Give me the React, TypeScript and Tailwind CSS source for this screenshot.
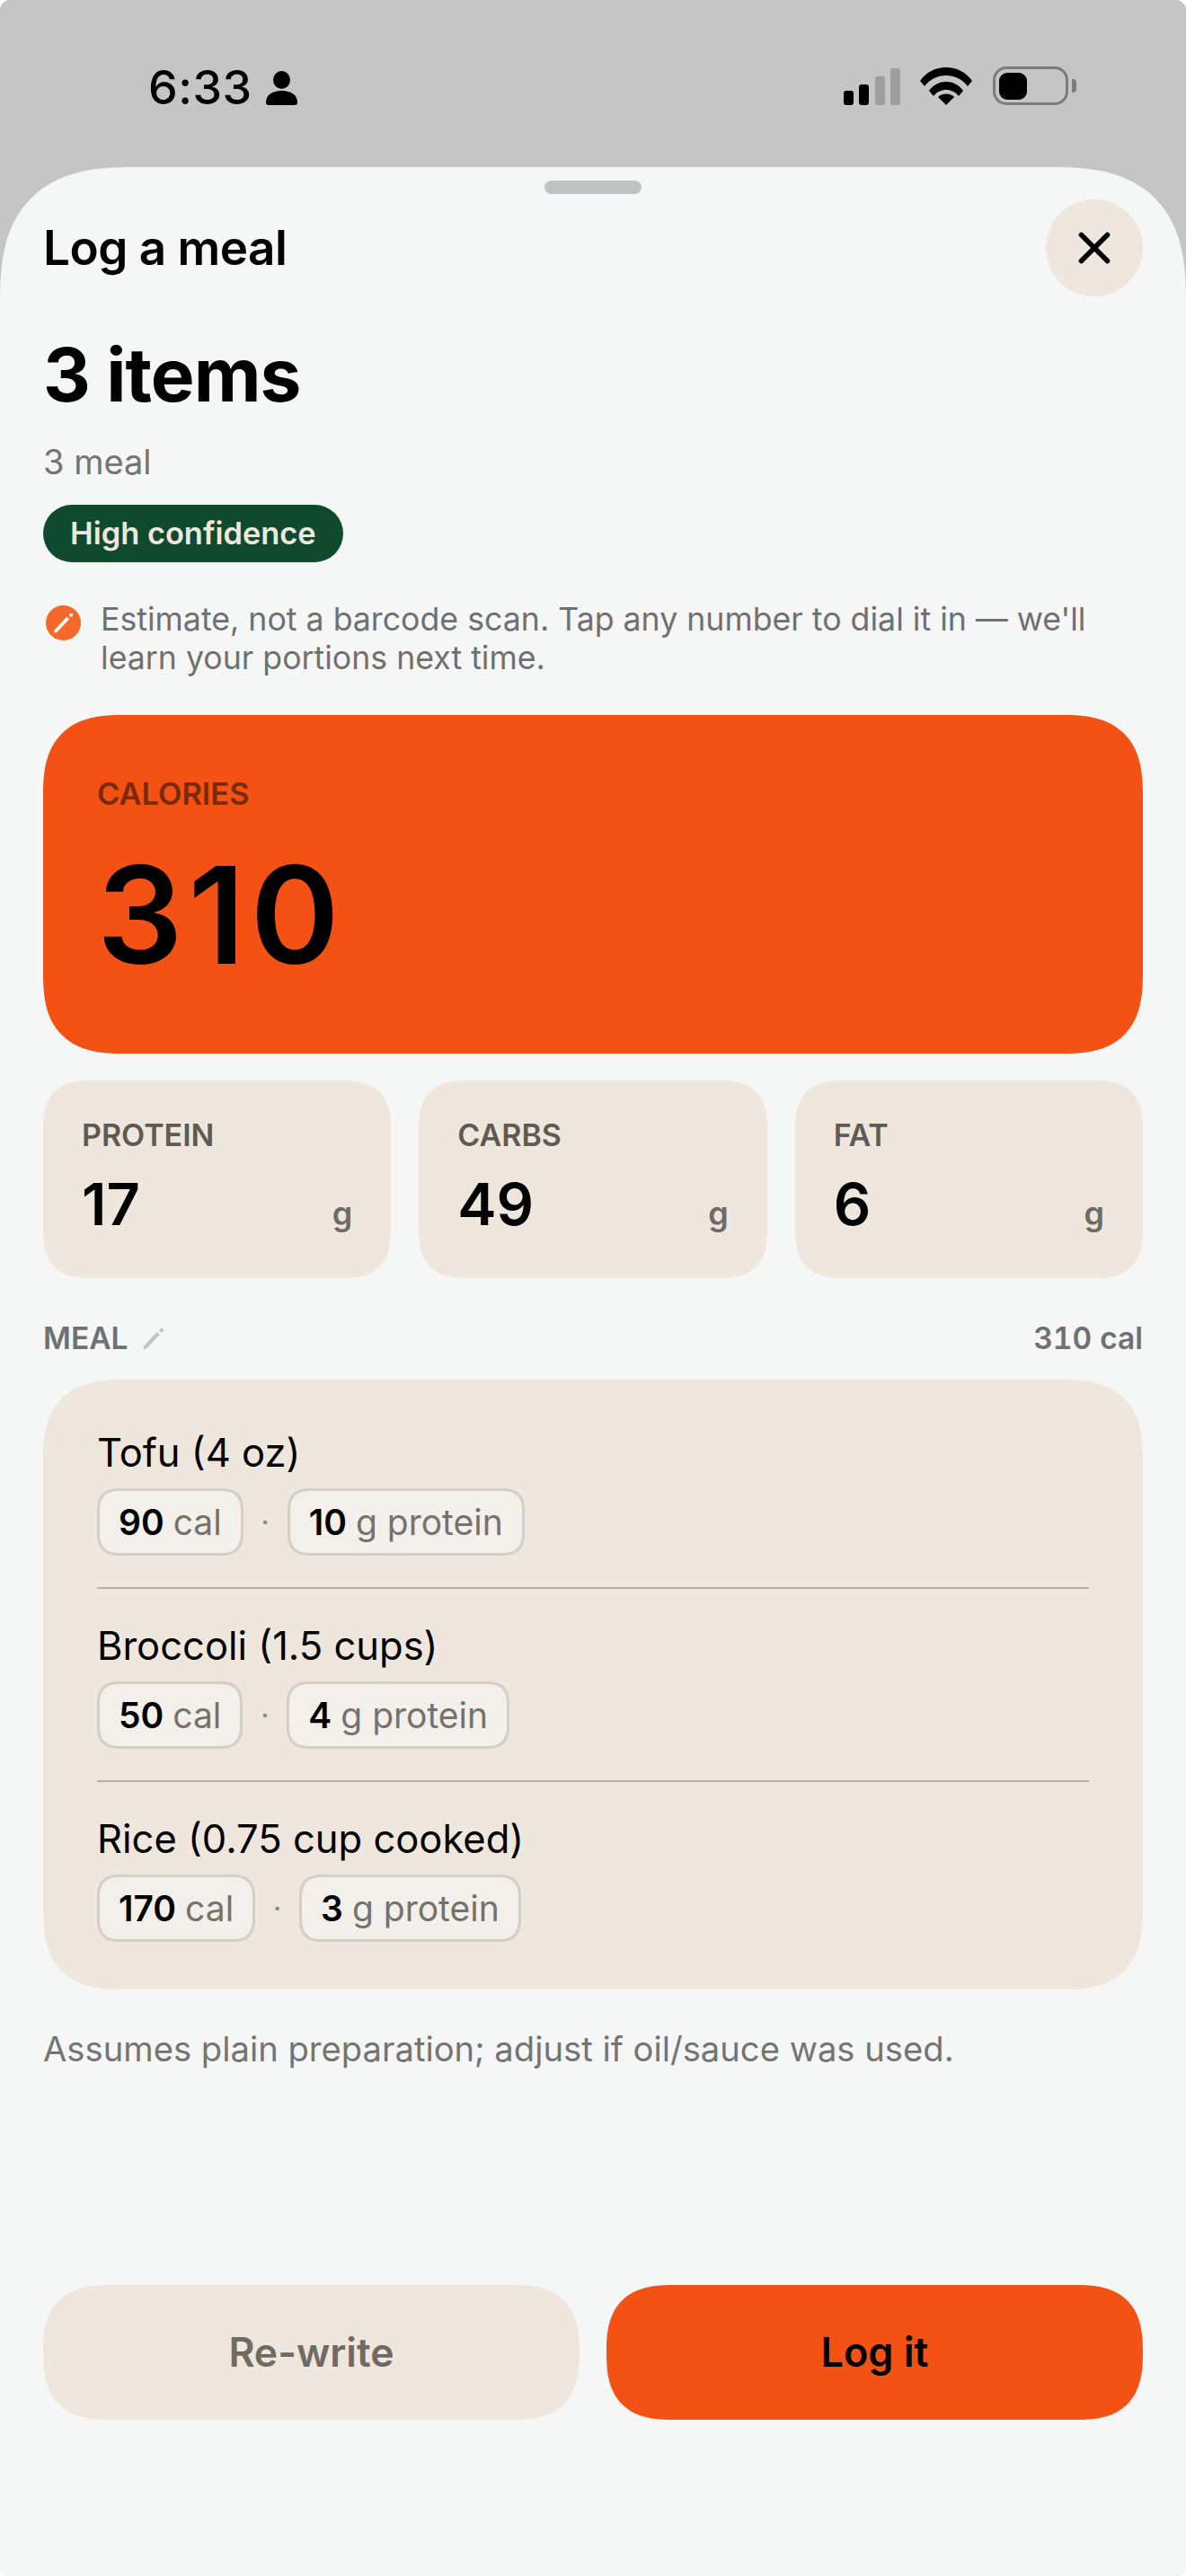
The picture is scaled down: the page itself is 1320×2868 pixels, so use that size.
import React from 'react';

const macros = [
    {label: 'PROTEIN', value: '17'},
    {label: 'CARBS', value: '49'},
    {label: 'FAT', value: '6'},
];

const items = [
    {name: 'Tofu (4 oz)', cal: '90', protein: '10'},
    {name: 'Broccoli (1.5 cups)', cal: '50', protein: '4'},
    {name: 'Rice (0.75 cup cooked)', cal: '170', protein: '3'},
];

const Pencil = ({className}: {className: string}) => (
    <svg viewBox="0 0 24 24" className={className} fill="currentColor">
        <path d="M2 22.6 L2.6 19.4 L15.6 5.4 L18.4 8 L5.2 21.8 Z"/>
        <circle cx="20.2" cy="3.6" r="2"/>
    </svg>
);

const Chip = ({value, unit}: {value: string; unit: string}) => (
    <div className="h-[75px] rounded-[26px] [corner-shape:superellipse(1.4)] border-[3px] border-[#d4cec7] bg-[#f3f0eb] px-[21px] flex items-center text-[39px] leading-none">
        <span className="font-semibold text-black">{value}</span>
        <span className="ml-[10px] text-[#75716c]">{unit}</span>
    </div>
);

const StatusBar = () => (
    <div className="h-[186px] shrink-0 bg-[#c5c5c5] relative flex justify-between pl-[165px] pr-[122px] pt-[71px]">
        <div className="flex items-start">
            <span className="mt-[1px] text-[52px] leading-[52px] font-medium tracking-[0.5px] text-black">6:33</span>
            <svg viewBox="0 0 35 38" className="w-[35px] h-[38px] ml-[15px] mt-[8px]" fill="black">
                <ellipse cx="17.5" cy="10" rx="9.5" ry="10"/>
                <path d="M0 35 C0 27 7 22 17.5 22 C28 22 35 27 35 35 C35 37 34 38 32 38 L3 38 C1 38 0 37 0 35 Z"/>
            </svg>
        </div>
        <div className="flex items-end h-[47px] pb-[1px]">
            <div className="flex items-end gap-[6.5px]">
                <div className="w-[11px] h-[16px] rounded-[3px] bg-black"/>
                <div className="w-[11px] h-[23px] rounded-[3px] bg-black"/>
                <div className="w-[11px] h-[32px] rounded-[3px] bg-[#9e9e9e]"/>
                <div className="w-[11px] h-[41px] rounded-[3px] bg-[#9e9e9e]"/>
            </div>
            <svg viewBox="0 0 58 42" className="w-[58px] h-[42px] ml-[22px]" fill="black">
                <path d="M0 15 C7 5 18 0 29 0 C40 0 51 5 58 15 L53 21 C47 13 38 9 29 9 C20 9 11 13 5 21 Z"/>
                <path d="M10 26 C15 19 22 16 29 16 C36 16 43 19 48 26 L43 32 C39 27 34 25 29 25 C24 25 19 27 15 32 Z"/>
                <path d="M20 33 C22 31 25 29.5 29 29.5 C33 29.5 36 31 38 33 L29 42 Z"/>
            </svg>
            <div className="ml-[23px] w-[84px] h-[43px] rounded-[15px] border-[3.5px] border-[#7b7b7b] p-[3.5px]">
                <div className="w-[31px] h-full rounded-[9px] bg-black"/>
            </div>
            <div className="ml-[4px] mb-[14px] w-[5px] h-[15px] rounded-r-[4px] bg-[#7b7b7b]"/>
        </div>
    </div>
);

export default function App() {
    return (
        <div className="w-[1320px] h-[2868px] overflow-hidden rounded-[12px] bg-[#c5c5c5] flex flex-col font-['Inter',sans-serif] text-black">
            <StatusBar/>
            <div className="flex-1 relative bg-[#f5f7f6] rounded-t-[150px] [corner-shape:superellipse(1.4)] px-[48px] flex flex-col">
                <div className="absolute top-[15px] left-[606px] w-[108px] h-[15px] rounded-full bg-[#c2c2c4]"/>

                <div className="flex justify-between items-start pt-[36px] h-[144px]">
                    <h1 className="text-[53px] leading-[108px] font-semibold tracking-[-0.5px]">Log a meal</h1>
                    <button className="w-[108px] h-[108px] rounded-full bg-[#efe7dd] flex items-center justify-center">
                        <svg viewBox="0 0 36 36" className="w-[36px] h-[36px]" stroke="black" strokeWidth="5.6" strokeLinecap="round">
                            <path d="M3.5 3.5 L32.5 32.5 M32.5 3.5 L3.5 32.5"/>
                        </svg>
                    </button>
                </div>

                <h2 className="mt-[38px] text-[82px] leading-[100px] font-bold tracking-[-1px]">3 items</h2>
                <p className="mt-[23px] text-[38px] leading-[46px] text-[#747474]">3 meal</p>
                <div className="mt-[25px] self-start h-[64px] rounded-full bg-[#0f4a2e] px-[30px] flex items-center text-[34.4px] font-semibold text-[#efe7dd]">
                    High confidence
                </div>

                <div className="mt-[42px] flex">
                    <div className="mt-[6px] ml-[3px] w-[39px] h-[39px] shrink-0 rounded-full bg-[#f4692b] flex items-center justify-center text-white">
                        <Pencil className="w-[25px] h-[25px]"/>
                    </div>
                    <p className="ml-[22px] text-[35.7px] leading-[43px] text-[#707070]">
                        Estimate, not a barcode scan. Tap any number to dial it in — we'll learn your portions next time.
                    </p>
                </div>

                <div className="mt-[42px] h-[377px] rounded-[90px] [corner-shape:superellipse(1.4)] bg-[#f45114] pl-[60px] pt-[68px]">
                    <div className="text-[34.4px] leading-[40px] font-semibold text-[#7a2a0a]">CALORIES</div>
                    <div className="mt-[40px] text-[150px] leading-[150px] font-semibold tracking-[6px]">310</div>
                </div>

                <div className="mt-[30px] grid grid-cols-3 gap-[31px]">
                    {macros.map(({label, value}) => (
                        <div key={label} className="h-[220px] rounded-[54px] [corner-shape:superellipse(1.4)] bg-[#efe7dd] px-[43px] pt-[41px]">
                            <div className="text-[34px] leading-[40px] font-semibold text-[#5f5b54]">{label}</div>
                            <div className="mt-[21px] flex justify-between items-baseline">
                                <span className="text-[65px] leading-[72px] font-semibold">{value}</span>
                                <span className="text-[36px] font-semibold text-[#6f6b64]">g</span>
                            </div>
                        </div>
                    ))}
                </div>

                <div className="mt-[47px] flex justify-between items-center h-[40px] text-[33.5px] font-semibold text-[#707070]">
                    <div className="flex items-center">
                        <span>MEAL</span>
                        <Pencil className="ml-[14px] w-[27px] h-[27px] text-[#c2c2c2]"/>
                    </div>
                    <span className="tabular-nums">310 cal</span>
                </div>

                <div className="mt-[26px] h-[679px] rounded-[90px] [corner-shape:superellipse(1.4)] bg-[#efe7dd] px-[60px] pt-[55px]">
                    {items.map(({name, cal, protein}, index) => (
                        <div key={name} className={index > 0 ? 'mt-[35px] pt-[37px] border-t-2 border-[#b8aea5]' : ''}>
                            <div className="text-[43.5px] leading-[53px]">{name}</div>
                            <div className="mt-[13px] flex items-center">
                                <Chip value={cal} unit="cal"/>
                                <span className="w-[49px] text-center text-[#8b8781] text-[32px] leading-none">·</span>
                                <Chip value={protein} unit="g protein"/>
                            </div>
                        </div>
                    ))}
                </div>

                <p className="mt-[43px] text-[38.2px] leading-[46px] text-[#747474]">
                    Assumes plain preparation; adjust if oil/sauce was used.
                </p>

                <div className="mt-[240px] grid grid-cols-2 gap-[30px]">
                    <button className="h-[150px] rounded-[75px] [corner-shape:superellipse(1.4)] bg-[#efe7dd] text-[44.5px] font-semibold text-[#6f6b64]">Re-write</button>
                    <button className="h-[150px] rounded-[75px] [corner-shape:superellipse(1.4)] bg-[#f45114] text-[45px] font-semibold text-black">Log it</button>
                </div>
            </div>
        </div>
    );
}
